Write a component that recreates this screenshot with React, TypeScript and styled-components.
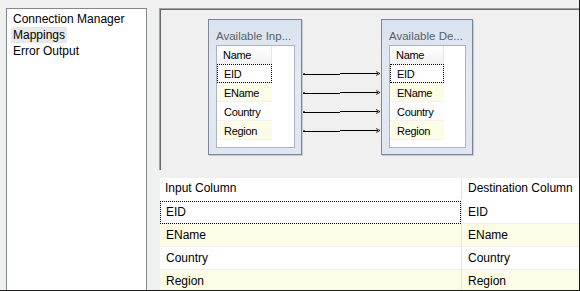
import { Fragment } from "react";
import styled, { createGlobalStyle } from "styled-components";

const GlobalStyle = createGlobalStyle`
    body {
        margin: 0;
        font-family: "Liberation Sans", Arial, sans-serif;
    }
    * { box-sizing: border-box; }
`

const Window = styled.div`
    width: 580px;
    height: 291px;
    display: flex;
    overflow: hidden;
    background-color: #f0f0f0;
    border-right: 1px solid #1c1c1c;
    border-bottom: 1px solid #1c1c1c;
    color: #000;
`

const NavPanel = styled.div`
    margin: 8px 0 0 6px;
    width: 141px;
    height: 320px;
    flex: none;
    background-color: #fff;
    border: 1px solid #828790;
    padding: 2px 0 0 4px;
`

const NavItem = styled.div<{ $hover?: boolean }>`
    width: fit-content;
    font-size: 12px;
    line-height: 16px;
    padding: 0 2px;
    background-color: ${p => (p.$hover ? "#e8e8e8" : "transparent")};
`

const Main = styled.div`
    flex: 1;
    margin-left: 12px;
    padding-top: 8px;
    display: flex;
    flex-direction: column;
    min-width: 0;
`

const Diagram = styled.div`
    height: 162px;
    flex: none;
    display: flex;
    align-items: flex-start;
    padding: 10px 0 0 48px;
    background-color: #f0f0f0;
    border-top: 1px solid #a0a0a0;
    border-left: 1px solid #a0a0a0;
    box-shadow: inset 1px 1px 0 #696969;
`

const TableBox = styled.div<{ $w: number }>`
    width: ${p => p.$w}px;
    height: 136px;
    flex: none;
    border: 1px solid #7d8796;
    background: linear-gradient(#d9e2ee, #e4eaf2 40%, #dfe6ef);
    padding: 0 6px 0 7px;
    box-shadow: 1px 1px 0 #c8ccd2;
`

const BoxTitle = styled.div`
    height: 25px;
    line-height: 32px;
    font-size: 11.5px;
    color: #5a5f66;
    white-space: nowrap;
    overflow: hidden;
`

const FieldList = styled.div`
    height: 103px;
    background-color: #fff;
    border: 1px solid #aab4c2;
    font-size: 11px;
    letter-spacing: -0.3px;
`

const FieldHead = styled.div<{ $w: number }>`
    width: ${p => p.$w}px;
    height: 18px;
    line-height: 18px;
    padding-left: 6px;
    background: linear-gradient(#ffffff, #f1f1f1);
    border-right: 1px solid #e6e6e6;
`

const Field = styled.div<{ $w: number; $alt?: boolean; $focus?: boolean }>`
    width: ${p => p.$w}px;
    height: 19px;
    line-height: 20px;
    padding-left: 7px;
    background-color: ${p => (p.$alt ? "#fdfce6" : "#fff")};
    border-bottom: 1px solid #f2f2f2;
    outline: ${p => (p.$focus ? "1px dotted #000" : "none")};
    outline-offset: -1px;
`

const Links = styled.svg`
    flex: none;
`

const Grid = styled.div`
    flex: 1;
    margin: 8px 0 0 1px;
    background-color: #fff;
    display: grid;
    grid-template-columns: 301px 1fr;
    grid-auto-rows: 23px;
    align-content: start;
    font-size: 12px;
`

const HeadCell = styled.div<{ $last?: boolean }>`
    height: 21px;
    line-height: 20px;
    padding-left: ${p => (p.$last ? 6 : 5)}px;
    white-space: nowrap;
    overflow: hidden;
    background-color: #fff;
    border-left: ${p => (p.$last ? "1px solid #e3e3e3" : "none")};
`

const Cell = styled.div<{ $alt?: boolean; $focus?: boolean; $last?: boolean }>`
    line-height: 23px;
    padding-left: 6px;
    white-space: nowrap;
    background-color: ${p => (p.$alt ? "#fdfce6" : "#fff")};
    border-bottom: 1px solid #eeeeee;
    border-left: ${p => (p.$last ? "1px solid #e3e3e3" : "none")};
    outline: ${p => (p.$focus ? "1px dotted #000" : "none")};
    outline-offset: -1px;
`

const fields = ["EID", "EName", "Country", "Region"];

const Connectors = () => (
    <Links width="79" height="140" viewBox="0 0 79 140">
        {fields.map((f, i) => {
            const y = 55.5 + i * 19;
            return (
                <g key={f} stroke="#000" strokeWidth="1" fill="none">
                    <rect x="1" y={y - 1.5} width="2" height="2" fill="#555" stroke="none" />
                    <path d={`M1 ${y} H38 M38 ${y - 1} H76`} />
                    <path d={`M74 ${y - 3} L78 ${y - 1} L74 ${y + 1}`} strokeWidth="0.8" />
                </g>
            );
        })}
    </Links>
);

const Table = ({ title, width, listW }: { title: string; width: number; listW: number }) => (
    <TableBox $w={width}>
        <BoxTitle>{title}</BoxTitle>
        <FieldList>
            <FieldHead $w={listW}>Name</FieldHead>
            {fields.map((f, i) => (
                <Field key={f} $w={listW} $alt={i % 2 === 1} $focus={i === 0}>{f}</Field>
            ))}
        </FieldList>
    </TableBox>
);

export default function App() {
    return (
        <>
            <GlobalStyle />
            <Window>
                <NavPanel>
                    <NavItem>Connection Manager</NavItem>
                    <NavItem $hover>Mappings</NavItem>
                    <NavItem>Error Output</NavItem>
                </NavPanel>
                <Main>
                    <Diagram>
                        <Table title="Available Inp..." width={94} listW={55} />
                        <Connectors />
                        <Table title="Available De..." width={92} listW={54} />
                    </Diagram>
                    <Grid>
                        <HeadCell>Input Column</HeadCell>
                        <HeadCell $last>Destination Column</HeadCell>
                        {fields.map((f, i) => (
                            <Fragment key={f}>
                                <Cell $alt={i % 2 === 1} $focus={i === 0}>{f}</Cell>
                                <Cell $alt={i % 2 === 1} $last>{f}</Cell>
                            </Fragment>
                        ))}
                    </Grid>
                </Main>
            </Window>
        </>
    );
}
